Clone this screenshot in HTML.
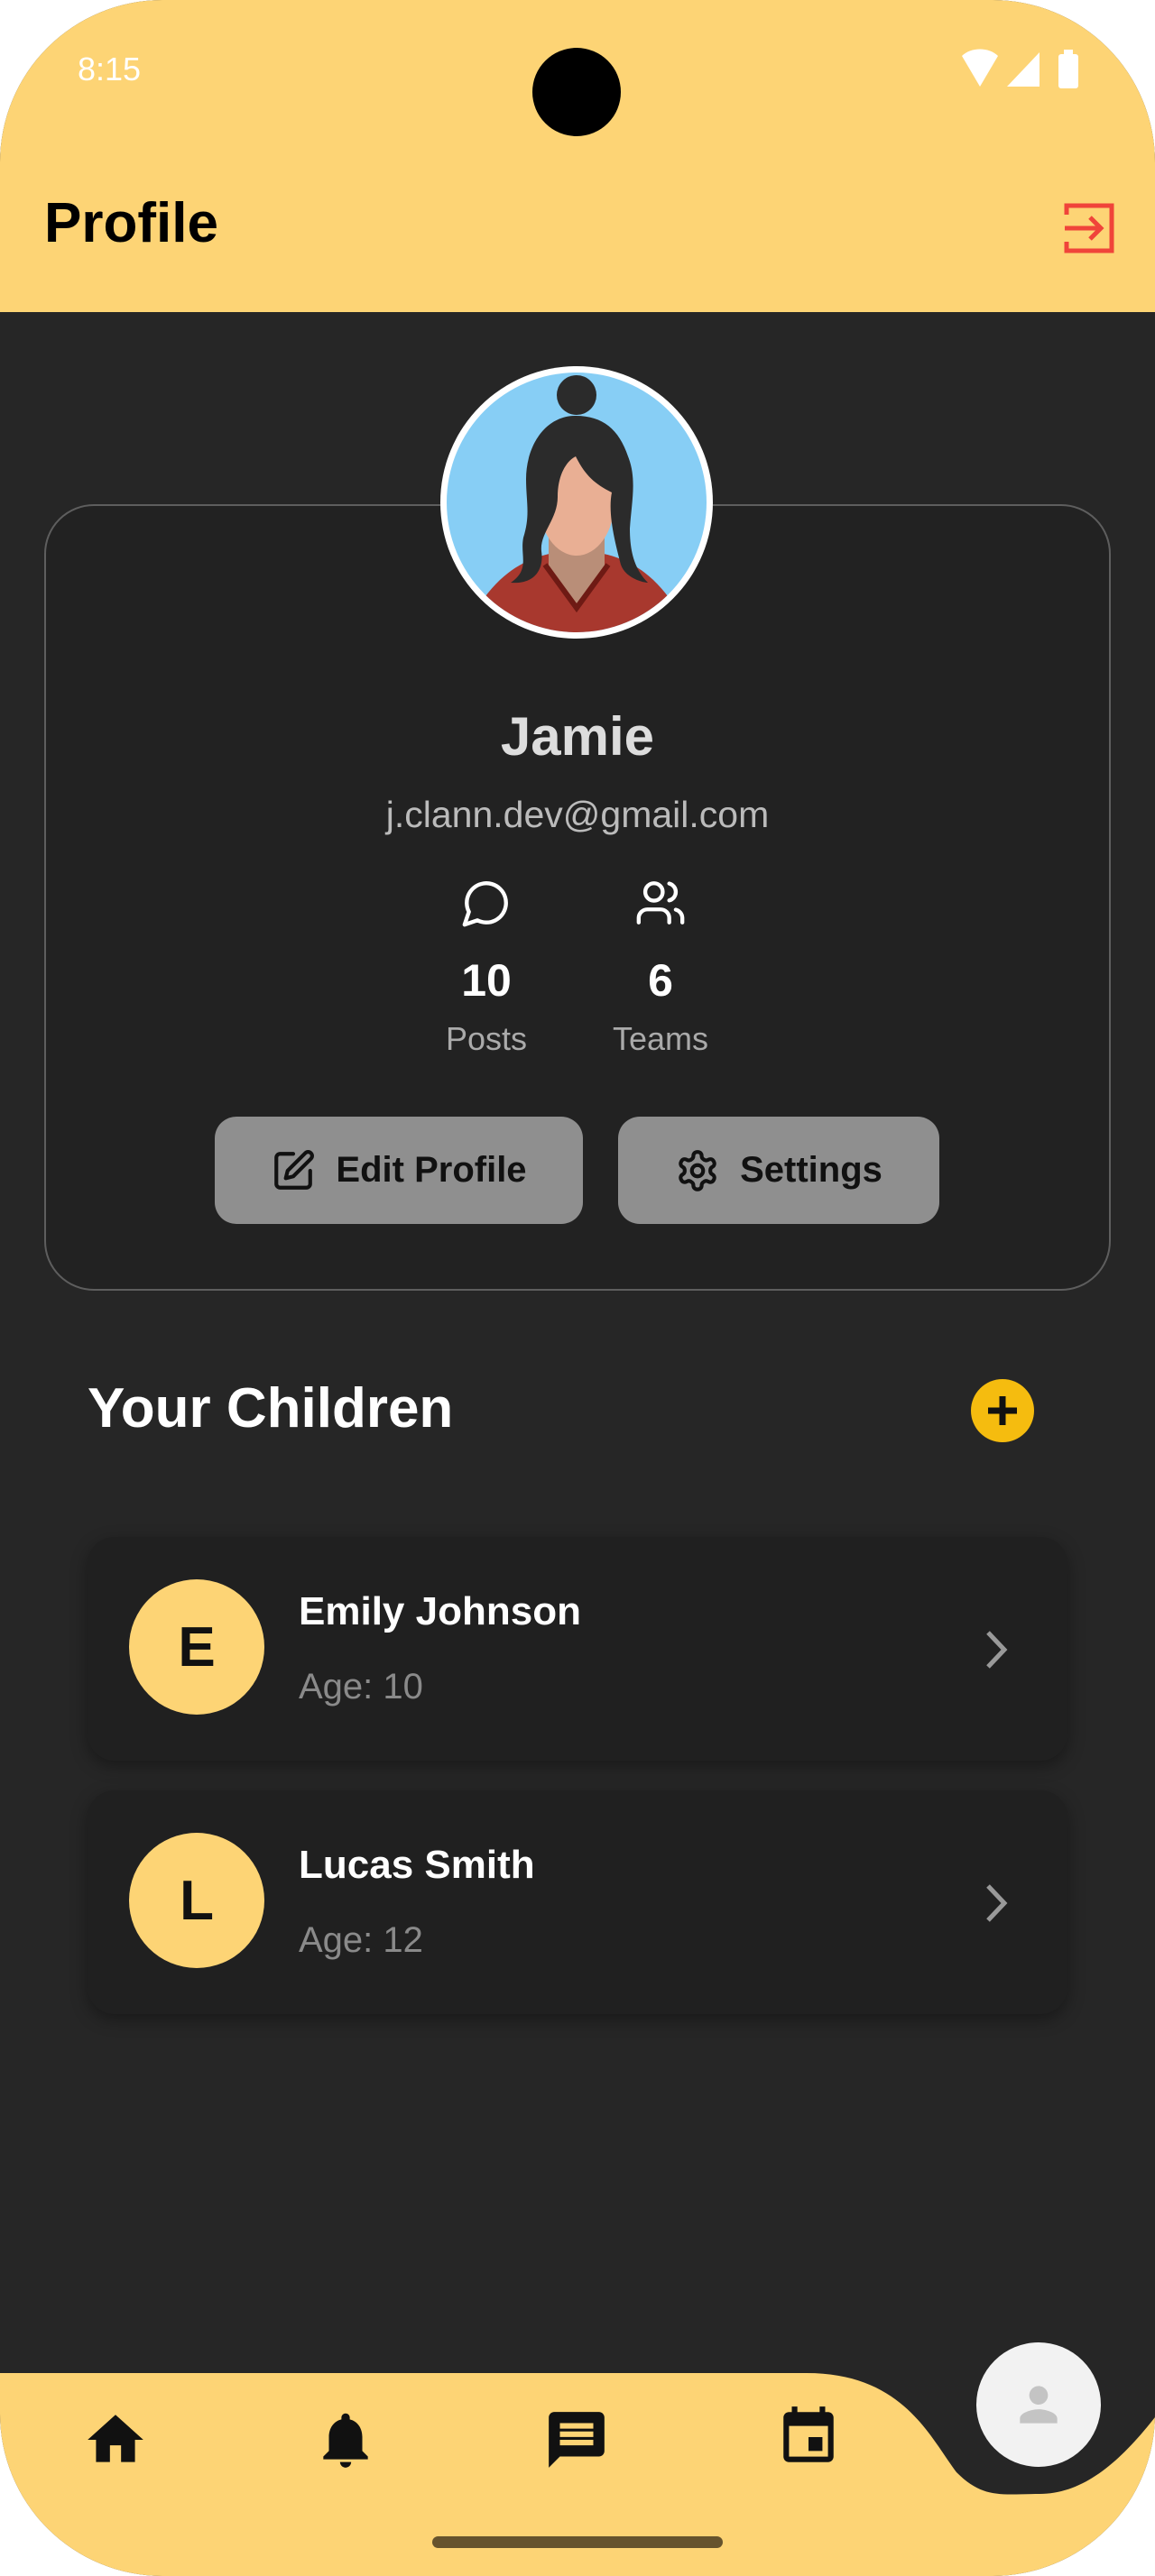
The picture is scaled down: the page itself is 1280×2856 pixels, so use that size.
<!DOCTYPE html>
<html><head><meta charset="utf-8"><style>
*{margin:0;padding:0;box-sizing:border-box}
body{width:1280px;height:2856px;background:#fff;font-family:"Liberation Sans",Roboto,sans-serif;overflow:hidden}
#s{position:absolute;left:0;top:0;width:1280px;height:2856px;border-radius:180px;overflow:hidden;background:#262626}
.hdr{position:absolute;left:0;top:0;width:1280px;height:346px;background:#FDD475}
.abs{position:absolute}
.card{position:absolute;left:49px;top:559px;width:1182px;height:872px;border:2px solid #5e5e5e;border-radius:55px;background:#222}
.btn{position:absolute;top:1238px;height:119px;background:#8f8f8f;border-radius:24px;display:flex;align-items:center;justify-content:center;font-weight:bold;font-size:40px;color:#111;gap:22px}
.child{position:absolute;left:97px;width:1086px;height:248px;background:#202020;border-radius:30px;box-shadow:0 6px 18px rgba(0,0,0,.35)}
.child .c{position:absolute;left:46px;top:47px;width:150px;height:150px;border-radius:50%;background:#FDD475;color:#111;font-weight:bold;font-size:62px;display:flex;align-items:center;justify-content:center}
.child .n{position:absolute;left:234px;top:58px;color:#fff;font-weight:bold;font-size:44px}
.child .a{position:absolute;left:234px;top:144px;color:#8a8a8a;font-size:40px}
.child svg{position:absolute;left:990px;top:100px}
</style></head><body><div id="s">
<div class="hdr"></div>
<div class="abs" style="left:86px;top:56px;color:#fff;font-size:36px">8:15</div>
<div class="abs" style="left:590px;top:53px;width:98px;height:98px;border-radius:50%;background:#000"></div>
<svg class="abs" style="left:1064px;top:54px" width="140" height="44" viewBox="0 0 140 44">
<path d="M2 8 C12 -2 32 -2 42 8 L22 42 Z" fill="#fff"/>
<path d="M52 42 L88 4 V42 Z" fill="#fff"/>
<rect x="109" y="6" width="22" height="38" rx="3" fill="#fff"/><rect x="115" y="1" width="10" height="6" fill="#fff"/>
</svg>
<div class="abs" style="left:49px;top:212px;font-size:62px;font-weight:bold;color:#000">Profile</div>
<svg class="abs" style="left:1178px;top:224px" width="60" height="58" viewBox="0 0 60 58" fill="none" stroke="#F0443A" stroke-width="5">
<path d="M4 14 V4 H54 V54 H4 V44"/><path d="M2 29 H40 M30 17 L42 29 L30 41"/></svg>

<div class="card"></div>
<svg class="abs" style="left:488px;top:406px" width="302" height="302" viewBox="0 0 302 302">
<defs><clipPath id="cp"><circle cx="151" cy="151" r="144"/></clipPath></defs>
<circle cx="151" cy="151" r="151" fill="#fff"/>
<g clip-path="url(#cp)">
<rect width="302" height="302" fill="#87CEF5"/>
<path d="M40 270 C70 220 110 205 151 205 C192 205 232 220 262 270 V310 H40 Z" fill="#A8382E"/>
<path d="M120 190 H182 V225 L151 265 L120 225 Z" fill="#B98E78"/>
<path d="M116 220 L151 268 L186 220" stroke="#6e1a14" stroke-width="6" fill="none"/>
<ellipse cx="151" cy="150" rx="42" ry="60" fill="#E9AF94"/>
<circle cx="151" cy="32" r="22" fill="#2b2b2b"/>
<path d="M150 55 C115 55 95 90 95 125 C95 150 100 165 92 190 C88 210 100 225 78 240 C105 242 115 225 112 205 C110 185 130 170 130 145 C130 120 140 105 150 100 C160 120 170 130 190 140 C185 165 195 200 200 220 C205 235 225 240 230 240 C215 225 210 205 210 180 C212 150 218 125 208 100 C198 70 180 55 150 55 Z" fill="#2b2b2b"/>
</g></svg>

<div class="abs" style="left:0;width:1280px;top:782px;text-align:center;color:#ddd;font-weight:bold;font-size:60px">Jamie</div>
<div class="abs" style="left:0;width:1280px;top:880px;text-align:center;color:#bbb;font-size:41px">j.clann.dev@gmail.com</div>
<svg class="abs" style="left:510px;top:972px" width="58" height="58" viewBox="0 0 24 24" fill="none" stroke="#fff" stroke-width="1.8" stroke-linecap="round" stroke-linejoin="round"><path d="M7.9 20A9 9 0 1 0 4 16.1L2 22Z"/></svg>
<svg class="abs" style="left:701px;top:972px" width="62" height="58" viewBox="0 0 24 24" fill="none" stroke="#fff" stroke-width="1.8" stroke-linecap="round" stroke-linejoin="round"><path d="M16 21v-2a4 4 0 0 0-4-4H6a4 4 0 0 0-4 4v2"/><circle cx="9" cy="7" r="4"/><path d="M22 21v-2a4 4 0 0 0-3-3.87M16 3.13a4 4 0 0 1 0 7.75"/></svg>
<div class="abs" style="left:439px;width:200px;top:1058px;text-align:center;color:#fff;font-weight:bold;font-size:50px">10</div>
<div class="abs" style="left:632px;width:200px;top:1058px;text-align:center;color:#fff;font-weight:bold;font-size:50px">6</div>
<div class="abs" style="left:439px;width:200px;top:1131px;text-align:center;color:#aaa;font-size:36px">Posts</div>
<div class="abs" style="left:632px;width:200px;top:1131px;text-align:center;color:#aaa;font-size:36px">Teams</div>

<div class="btn" style="left:238px;width:408px"><svg width="50" height="50" viewBox="0 0 24 24" fill="none" stroke="#111" stroke-width="2" stroke-linecap="round" stroke-linejoin="round"><path d="M12 3H5a2 2 0 0 0-2 2v14a2 2 0 0 0 2 2h14a2 2 0 0 0 2-2v-7"/><path d="M18.4 2.6a2.1 2.1 0 0 1 3 3L12 15l-4 1 1-4Z"/></svg>Edit Profile</div>
<div class="btn" style="left:685px;width:356px"><svg width="50" height="50" viewBox="0 0 24 24" fill="none" stroke="#111" stroke-width="2" stroke-linecap="round" stroke-linejoin="round"><path d="M12.2 2h-.4a2 2 0 0 0-2 2v.2a2 2 0 0 1-1 1.7l-.4.3a2 2 0 0 1-2 0l-.2-.1a2 2 0 0 0-2.7.7l-.2.4a2 2 0 0 0 .7 2.7l.2.1a2 2 0 0 1 1 1.7v.5a2 2 0 0 1-1 1.7l-.2.1a2 2 0 0 0-.7 2.7l.2.4a2 2 0 0 0 2.7.7l.2-.1a2 2 0 0 1 2 0l.4.3a2 2 0 0 1 1 1.7v.2a2 2 0 0 0 2 2h.4a2 2 0 0 0 2-2v-.2a2 2 0 0 1 1-1.7l.4-.3a2 2 0 0 1 2 0l.2.1a2 2 0 0 0 2.7-.7l.2-.4a2 2 0 0 0-.7-2.7l-.2-.1a2 2 0 0 1-1-1.7v-.5a2 2 0 0 1 1-1.7l.2-.1a2 2 0 0 0 .7-2.7l-.2-.4a2 2 0 0 0-2.7-.7l-.2.1a2 2 0 0 1-2 0l-.4-.3a2 2 0 0 1-1-1.7V4a2 2 0 0 0-2-2z"/><circle cx="12" cy="12" r="3"/></svg>Settings</div>

<div class="abs" style="left:97px;top:1526px;color:#fff;font-weight:bold;font-size:62px">Your Children</div>
<svg class="abs" style="left:1076px;top:1529px" width="70" height="70" viewBox="0 0 70 70"><circle cx="35" cy="35" r="35" fill="#F5BC0F"/><path d="M35 19V51M19 35H51" stroke="#111" stroke-width="7"/></svg>

<div class="child" style="top:1704px"><div class="c">E</div><div class="n">Emily Johnson</div><div class="a">Age: 10</div><svg width="36" height="50" viewBox="0 0 36 50"><path d="M8 6L26 25L8 44" stroke="#999" stroke-width="5" fill="none"/></svg></div>
<div class="child" style="top:1985px"><div class="c">L</div><div class="n">Lucas Smith</div><div class="a">Age: 12</div><svg width="36" height="50" viewBox="0 0 36 50"><path d="M8 6L26 25L8 44" stroke="#999" stroke-width="5" fill="none"/></svg></div>

<svg class="abs" style="left:0;top:2631px" width="1280" height="225" viewBox="0 0 1280 225">
<rect width="1280" height="225" fill="#FDD475"/>
<path d="M894 0 C1000 0 1030 70 1060 110 C1090 140 1110 134 1152 134 C1200 134 1240 100 1280 49 V0 Z" fill="#262626"/>
<rect x="479" y="181" width="322" height="13" rx="6.5" fill="#66532d"/>
</svg>
<svg class="abs" style="left:91px;top:2668px" width="74" height="74" viewBox="0 0 24 24"><path d="M10 20v-6h4v6h5v-8h3L12 3 2 12h3v8z" fill="#111"/></svg>
<svg class="abs" style="left:346px;top:2668px" width="74" height="74" viewBox="0 0 24 24"><path d="M12 22c1.1 0 2-.9 2-2h-4c0 1.1.9 2 2 2zm6-6v-5c0-3.07-1.63-5.640-4.5-6.32V4c0-.83-.67-1.5-1.5-1.5s-1.5.67-1.5 1.5v.68C7.64 5.36 6 7.920 6 11v5l-2 2v1h16v-1l-2-2z" fill="#111"/></svg>
<svg class="abs" style="left:602px;top:2668px" width="74" height="74" viewBox="0 0 24 24"><path d="M20 2H4c-1.1 0-2 .9-2 2v18l4-4h14c1.1 0 2-.9 2-2V4c0-1.1-.9-2-2-2zm-2 12H6v-2h12v2zm0-3H6V9h12v2zm0-3H6V6h12v2z" fill="#111"/></svg>
<svg class="abs" style="left:859px;top:2662px" width="74" height="80" viewBox="0 0 24 24"><path d="M17 12h-5v5h5v-5zM16 1v2H8V1H6v2H5c-1.11 0-2 .9-2 2v14c0 1.1.89 2 2 2h14c1.1 0 2-.9 2-2V5c0-1.1-.9-2-2-2h-1V1h-2zm3 18H5V8h14v11z" fill="#111"/></svg>
<div class="abs" style="left:1082px;top:2597px;width:138px;height:138px;border-radius:50%;background:#f2f2f2"></div>
<svg class="abs" style="left:1120px;top:2635px" width="62" height="62" viewBox="0 0 24 24"><path d="M12 12c2.21 0 4-1.790 4-4s-1.79-4-4-4-4 1.79-4 4 1.79 4 4 4zm0 2c-2.67 0-8 1.34-8 4v2h16v-2c0-2.66-5.33-4-8-4z" fill="#c4c4c4"/></svg>
</div></body></html>
